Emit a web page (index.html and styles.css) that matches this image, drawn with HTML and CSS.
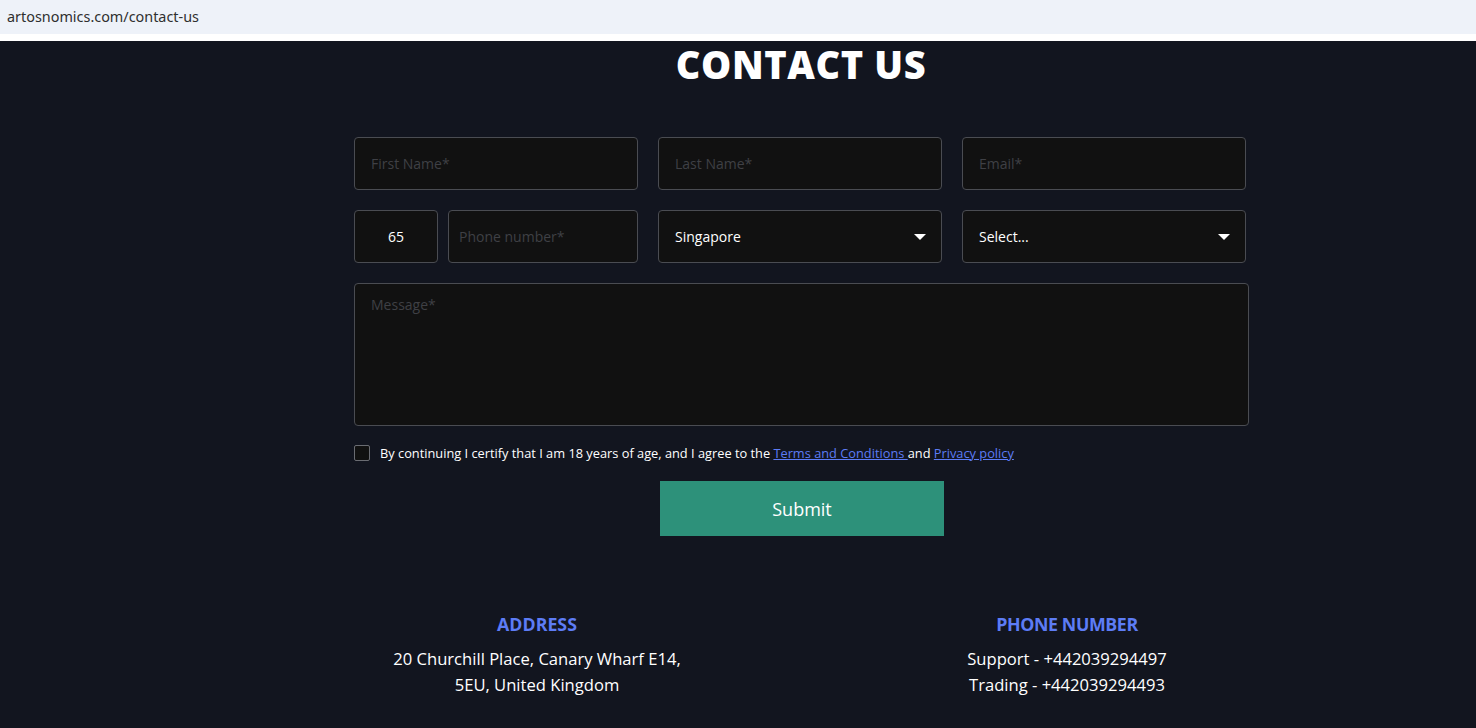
FILE: index.html
```html
<!DOCTYPE html>
<html lang="en">
<head>
<meta charset="utf-8">
<title>Contact Us</title>
<link rel="stylesheet" href="styles.css">
</head>
<body>
<div class="urlbar">artosnomics.com/contact-us</div>
<div class="strip"></div>
<main class="page">
  <section class="contact">
    <h1 class="title">CONTACT US</h1>
    <form class="form">
      <div class="row row-3">
        <div class="field"><span class="ph">First Name*</span></div>
        <div class="field"><span class="ph">Last Name*</span></div>
        <div class="field"><span class="ph">Email*</span></div>
      </div>
      <div class="row row-3">
        <div class="phone">
          <div class="field code">65</div>
          <div class="field tel"><span class="ph">Phone number*</span></div>
        </div>
        <div class="field select"><span class="val">Singapore</span><span class="caret"></span></div>
        <div class="field select"><span class="val">Select...</span><span class="caret"></span></div>
      </div>
      <div class="field message"><span class="ph">Message*</span></div>
      <div class="agree">
        <span class="box"></span>
        <span class="agree-text">By continuing I certify that I am 18 years of age, and I agree to the <a href="#">Terms and Conditions </a>and <a href="#">Privacy policy</a></span>
      </div>
      <div class="submit-wrap"><button type="button" class="submit">Submit</button></div>
    </form>
    <div class="info">
      <div class="info-col">
        <h2>ADDRESS</h2>
        <p>20 Churchill Place, Canary Wharf E14,<br>5EU, United Kingdom</p>
      </div>
      <div class="info-col">
        <h2 class="phone-h">PHONE NUMBER</h2>
        <p>Support - +442039294497<br>Trading - +442039294493</p>
      </div>
    </div>
  </section>
</main>
</body>
</html>
```
FILE: styles.css
```css
* { box-sizing: border-box; }
html, body { margin: 0; padding: 0; }
body {
  font-family: "Open Sans", "Noto Sans", sans-serif;
  background: #12151f;
  height: 728px;
  overflow: hidden;
}
.urlbar {
  height: 34px;
  background: #eef2f9;
  color: #2f2f2f;
  font-family: "Noto Sans", "Open Sans", sans-serif;
  font-size: 14.4px;
  line-height: 34px;
  padding-left: 7px;
}
.strip { height: 7px; background: #ffffff; }
.page { background: #12151f; }
.contact {
  width: 894px;
  margin-left: 354px;
}
.title {
  margin: 0;
  text-align: center;
  color: #ffffff;
  font-family: "Open Sans", sans-serif;
  font-weight: 800;
  font-size: 38px;
  line-height: 46px;
  letter-spacing: 0.6px;
  height: 96px;
}
.form { display: flex; flex-direction: column; }
.row { display: grid; gap: 20px; margin-bottom: 20px; }
.row-3 { grid-template-columns: 284px 284px 284px; }
.phone { display: grid; grid-template-columns: 84px 1fr; gap: 10px; }
.field {
  height: 53px;
  background: #111111;
  border: 1px solid #4a4c52;
  border-radius: 4px;
  display: flex;
  align-items: center;
  padding: 0 16px;
  font-size: 14px;
  color: #ffffff;
}
.ph { color: #3f4045; }
.code { justify-content: center; padding: 0; }
.tel { padding-left: 10px; }
.select { justify-content: space-between; }
.caret {
  width: 0; height: 0;
  border-left: 6px solid transparent;
  border-right: 6px solid transparent;
  border-top: 6px solid #ffffff;
  margin-right: -1px;
}
.message {
  width: 895px;
  height: 143px;
  align-items: flex-start;
  padding-top: 11px;
}
.agree {
  display: flex;
  align-items: center;
  gap: 10px;
  margin-top: 18px;
  height: 17px;
}
.box {
  width: 16px; height: 16px;
  border: 1px solid #6a6c72;
  border-radius: 2px;
  background: #111111;
  flex: none;
}
.agree-text { color: #ffffff; font-size: 12.8px; letter-spacing: 0; white-space: nowrap; }
.agree-text a { color: #5d7cf5; }
.submit-wrap { display: flex; justify-content: center; margin-top: 20px; }
.submit {
  width: 284px; height: 55px;
  margin-left: 2px;
  background: #2d917a;
  border: none;
  color: #ffffff;
  font-family: "Open Sans", sans-serif;
  font-size: 18px;
  font-weight: 500;
}
.info {
  display: grid;
  grid-template-columns: 530px 530px;
  margin-left: -82px;
  margin-top: 76px;
  text-align: center;
}
.info h2 {
  margin: 0 0 10px;
  color: #5d7cf5;
  font-size: 17.8px;
  font-weight: 700;
  line-height: 24px;
}
.info h2.phone-h { letter-spacing: -0.4px; }
.info p {
  margin: 0;
  color: #ffffff;
  font-size: 16.6px;
  line-height: 26px;
}
```
